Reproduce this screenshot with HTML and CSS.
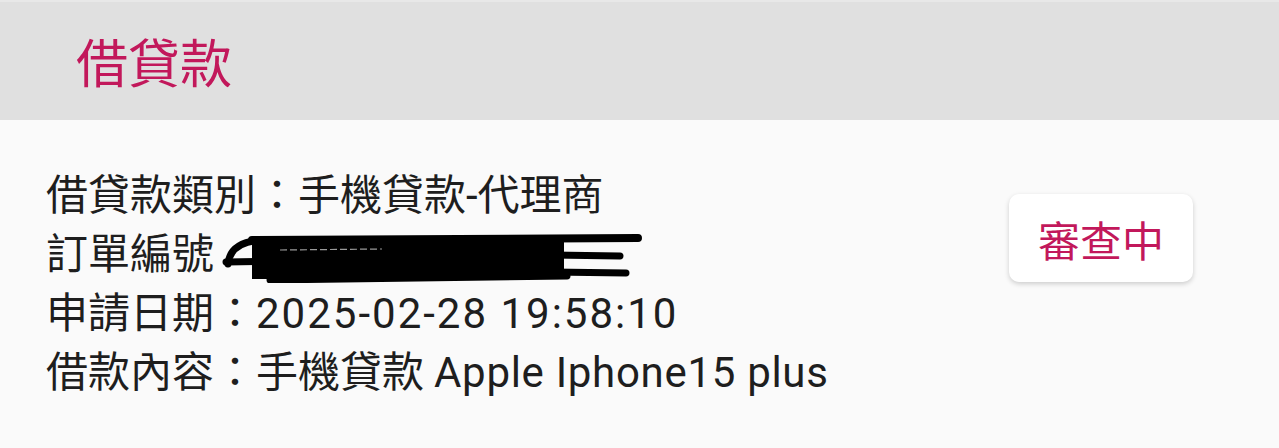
FILE: index.html
```html
<!DOCTYPE html>
<html lang="zh-Hant">
<head>
<meta charset="utf-8">
<link rel="stylesheet" href="styles.css">
</head>
<body>
<header class="topbar">
  <h1 class="title">借貸款</h1>
</header>
<main class="card">
  <div class="info">
    <div class="row">借貸款類別：手機貸款-代理商</div>
    <div class="row">訂單編號 <svg class="redact" viewBox="0 0 425 52" width="425" height="52" aria-hidden="true">
        <rect x="30" y="8" width="312" height="40" fill="#000"/>
        <path d="M6 33 Q8 11 40 9" stroke="#000" stroke-width="7" fill="none" stroke-linecap="round"/>
        <path d="M4 31 L60 30" stroke="#000" stroke-width="7" fill="none" stroke-linecap="round"/>
        <path d="M30 9 L416 7" stroke="#000" stroke-width="8" fill="none" stroke-linecap="round"/>
        <path d="M330 24 L398 25" stroke="#000" stroke-width="7" fill="none" stroke-linecap="round"/>
        <path d="M330 41 L404 42" stroke="#000" stroke-width="7" fill="none" stroke-linecap="round"/>
        <path d="M48 49 L345 45" stroke="#000" stroke-width="7" fill="none" stroke-linecap="round"/>
        <path d="M58 19 L160 18" stroke="#9a9a9a" stroke-width="1.2" stroke-dasharray="7 3" fill="none"/>
      </svg></div>
    <div class="row">申請日期：<span class="date">2025-02-28 19:58:10</span></div>
    <div class="row">借款內容：手機貸款 <span class="latin">Apple Iphone15 plus</span></div>
  </div>
  <div class="status">審查中</div>
</main>
</body>
</html>
```
FILE: styles.css
```css
html, body {
  margin: 0;
  padding: 0;
}
body {
  width: 1279px;
  height: 448px;
  background: #fafafa;
  font-family: Roboto, "Noto Sans CJK TC", sans-serif;
  color: #1e1e1e;
  overflow: hidden;
}
.topbar {
  height: 118px;
  background: #e0e0e0;
  border-top: 2px solid #e8e8e8;
  display: flex;
  align-items: center;
  padding-left: 76px;
}
.title {
  margin: 0;
  font-family: "Noto Sans CJK TC", sans-serif;
  font-weight: 400;
  font-size: 52px;
  color: #c2185b;
  line-height: 1;
}
.card {
  display: flex;
  align-items: flex-start;
  justify-content: space-between;
  padding: 46px 86px 0 46px;
}
.info {
  display: flex;
  flex-direction: column;
}
.row {
  font-size: 42px;
  line-height: 59px;
  height: 59px;
  white-space: nowrap;
  display: flex;
  align-items: center;
}
.date {
  letter-spacing: 2px;
}
.latin {
  letter-spacing: 0.7px;
  margin-left: 10px;
}
.redact {
  display: block;
  margin-left: 8px;
  margin-top: 4px;
}
.status {
  background: #fff;
  border-radius: 10px;
  box-shadow: 0 2px 5px rgba(0,0,0,0.18);
  width: 184px;
  height: 88px;
  margin-top: 28px;
  display: flex;
  align-items: center;
  justify-content: center;
  font-family: "Noto Sans CJK TC", sans-serif;
  font-size: 42px;
  color: #c2185b;
}
```
